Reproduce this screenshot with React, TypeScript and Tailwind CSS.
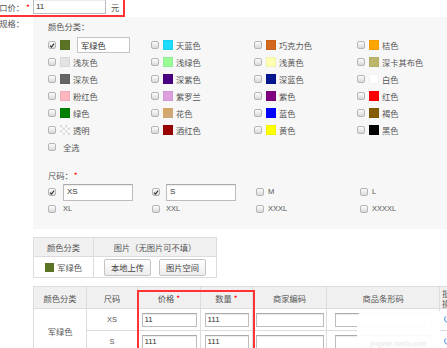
import type React from "react";

const CJK = "font-[Noto_Sans_CJK_SC,sans-serif]";
const LAT = "font-[Liberation_Sans,Noto_Sans_CJK_SC,sans-serif]";

const colors: [string, string][] = [
  ["军绿色", "#5b7424"],
  ["天蓝色", "#1edcff"],
  ["巧克力色", "#d2691e"],
  ["桔色", "#ffa500"],
  ["浅灰色", "#e3e3e3"],
  ["浅绿色", "#98fb98"],
  ["浅黄色", "#ffffb1"],
  ["深卡其布色", "#bdb76b"],
  ["深灰色", "#666666"],
  ["深紫色", "#4b0082"],
  ["深蓝色", "#041690"],
  ["白色", "#ffffff"],
  ["粉红色", "#ffb6c1"],
  ["紫罗兰", "#dda0dd"],
  ["紫色", "#800080"],
  ["红色", "#ff0000"],
  ["绿色", "#008000"],
  ["花色", "flower"],
  ["蓝色", "#0000ff"],
  ["褐色", "#855b00"],
  ["透明", "clear"],
  ["酒红色", "#990000"],
  ["黄色", "#ffff00"],
  ["黑色", "#000000"],
];

function Checkbox({ checked = false }: { checked?: boolean }) {
  return (
    <span className="flex h-[8px] w-[8px] shrink-0 items-center justify-center rounded-[2px] border border-[#b5b5b5] bg-linear-to-b from-[#fdfdfd] to-[#d9d9d9]">
      {checked && (
        <svg viewBox="0 0 8 8" className="h-[7px] w-[7px]">
          <path d="M1.4 4.3 L3.2 6.1 L6.7 1.5" fill="none" stroke="#333" strokeWidth="1.5" />
        </svg>
      )}
    </span>
  );
}

function Swatch({ color }: { color: string }) {
  if (color === "flower") {
    return <span className="block h-[10px] w-[10px] shrink-0 bg-linear-to-br from-[#dba35c] to-[#c9a982]" />;
  }
  if (color === "clear") {
    return (
      <svg width="10" height="10" className="block shrink-0">
        <rect width="10" height="10" fill="#fff" />
        <rect x="0" y="0" width="2.5" height="2.5" fill="#ddd" />
        <rect x="5" y="0" width="2.5" height="2.5" fill="#ddd" />
        <rect x="2.5" y="2.5" width="2.5" height="2.5" fill="#ddd" />
        <rect x="7.5" y="2.5" width="2.5" height="2.5" fill="#ddd" />
        <rect x="0" y="5" width="2.5" height="2.5" fill="#ddd" />
        <rect x="5" y="5" width="2.5" height="2.5" fill="#ddd" />
        <rect x="2.5" y="7.5" width="2.5" height="2.5" fill="#ddd" />
        <rect x="7.5" y="7.5" width="2.5" height="2.5" fill="#ddd" />
      </svg>
    );
  }
  return (
    <span
      className="block h-[10px] w-[10px] shrink-0 border border-black/5"
      style={{ backgroundColor: color }}
    />
  );
}

function TextBox({ value, className }: { value: string; className: string }) {
  return (
    <span
      className={`flex items-center border border-[#bdbdbd] border-t-[#a9a9a9] bg-white pl-[2px] text-[8px] text-[#333] shadow-[inset_0_1px_1px_rgba(0,0,0,0.08)] ${LAT} ${className}`}
    >
      {value}
    </span>
  );
}

function Label({ text, required = false }: { text: string; required?: boolean }) {
  return (
    <div className="flex w-[33px] shrink-0">
      <div className="flex w-[24px] justify-end whitespace-nowrap">{text}</div>
      {required && <span className="pl-[2px] text-[#f00]">*</span>}
    </div>
  );
}

function Th({ children, className = "" }: { children: React.ReactNode; className?: string }) {
  return (
    <th className={`border border-[#dcdcdc] bg-[#f0f0f0] p-0 text-center font-normal ${className}`}>
      {children}
    </th>
  );
}

function Td({ children, className = "", rowSpan }: { children?: React.ReactNode; className?: string; rowSpan?: number }) {
  return (
    <td rowSpan={rowSpan} className={`border border-[#dcdcdc] p-0 text-center ${className}`}>
      {children}
    </td>
  );
}

function Btn({ children }: { children: React.ReactNode }) {
  return (
    <span className="flex h-[17px] w-[47px] items-center justify-center rounded-[2px] border border-[#c4c4c4] bg-linear-to-b from-white to-[#ececec] text-[#444]">
      {children}
    </span>
  );
}

function EditIcon() {
  return (
    <svg width="8" height="9" viewBox="0 0 8 9" className="ml-[4px] block">
      <path d="M2 1.5 A3 3 0 1 0 6.5 3" fill="none" stroke="#6aa8e0" strokeWidth="1.2" />
    </svg>
  );
}

export default function App() {
  return (
    <div className={`relative h-[348px] w-[447px] overflow-hidden bg-white text-[8.25px] leading-[10px] text-[#555] ${CJK}`}>
      {/* 一口价 */}
      <div className="-mt-[1px] flex h-[18px] w-[125px] items-start border-b-2 border-r-2 border-[#f33]">
        <div className="flex h-[15px] items-center">
          <Label text="一口价：" required />
          <TextBox value="11" className="h-[15px] w-[73px]" />
          <span className="ml-[5px]">元</span>
        </div>
      </div>

      {/* 规格 */}
      <div className="flex">
        <div className="pt-[1px]">
          <Label text="规格：" />
        </div>
        <div className="flex-1 bg-[#f7f7f7] pb-[11.5px] pl-[15px] pt-[4px]">
          <div className="h-[10px]">颜色分类：</div>
          <div className="mt-[5.5px] grid grid-cols-[103px_103px_103px_103px] auto-rows-[17px]">
            {colors.map(([name, c], i) => (
              <div key={name} className="flex items-center">
                <Checkbox checked={i === 0} />
                <span className="ml-[4px] flex">
                  <Swatch color={c} />
                </span>
                {i === 0 ? (
                  <span className="ml-[7px] flex h-[16px] w-[53px] items-center border border-[#c4c4c4] bg-white pl-[3px] text-[#333]">
                    {name}
                  </span>
                ) : (
                  <span className="ml-[3px] whitespace-nowrap">{name}</span>
                )}
              </div>
            ))}
            <div className="flex items-center">
              <Checkbox />
              <span className="ml-[7px]">全选</span>
            </div>
          </div>

          <div className="mt-[14.5px] flex h-[10px]">
            尺码：<span className="ml-[1px] text-[#f00]">*</span>
          </div>
          <div className={`mt-[3.5px] grid grid-cols-[104px_104px_104px_104px] auto-rows-[17px] text-[7.5px] ${LAT}`}>
            <div className="flex items-center">
              <Checkbox checked />
              <TextBox value="XS" className="ml-[7px] h-[17px] w-[70px] pl-[3px]" />
            </div>
            <div className="flex items-center">
              <Checkbox checked />
              <TextBox value="S" className="ml-[6px] h-[17px] w-[70px] pl-[3px]" />
            </div>
            <div className="flex items-center">
              <Checkbox />
              <span className="ml-[4px]">M</span>
            </div>
            <div className="flex items-center">
              <Checkbox />
              <span className="ml-[4px]">L</span>
            </div>
            <div className="flex items-center">
              <Checkbox />
              <span className="ml-[7px]">XL</span>
            </div>
            <div className="flex items-center">
              <Checkbox />
              <span className="ml-[6px]">XXL</span>
            </div>
            <div className="flex items-center">
              <Checkbox />
              <span className="ml-[4px]">XXXL</span>
            </div>
            <div className="flex items-center">
              <Checkbox />
              <span className="ml-[4px]">XXXXL</span>
            </div>
          </div>
        </div>
      </div>

      {/* 图片表 */}
      <table className="ml-[33px] mt-[8px] w-[183px] table-fixed border-collapse">
        <colgroup>
          <col className="w-[60px]" />
          <col className="w-[123px]" />
        </colgroup>
        <thead>
          <tr className="h-[19px]">
            <Th>颜色分类</Th>
            <Th>图片（无图片可不填）</Th>
          </tr>
        </thead>
        <tbody>
          <tr className="h-[21px]">
            <Td>
              <div className="flex items-center justify-center gap-[3px]">
                <span className="block h-[9px] w-[9px] bg-[#5b7424]" />
                <span>军绿色</span>
              </div>
            </Td>
            <Td>
              <div className="flex items-center justify-center gap-[8px]">
                <Btn>本地上传</Btn>
                <Btn>图片空间</Btn>
              </div>
            </Td>
          </tr>
        </tbody>
      </table>

      {/* SKU 表 */}
      <table className="ml-[33px] mt-[8px] w-[436px] table-fixed border-collapse">
        <colgroup>
          <col className="w-[53px]" />
          <col className="w-[51px]" />
          <col className="w-[63px]" />
          <col className="w-[52px]" />
          <col className="w-[74px]" />
          <col className="w-[113px]" />
          <col className="w-[30px]" />
        </colgroup>
        <thead>
          <tr className="h-[22px]">
            <Th>颜色分类</Th>
            <Th>尺码</Th>
            <Th>
              价格<span className="ml-[2px] text-[#f00]">*</span>
            </Th>
            <Th>
              数量<span className="ml-[2px] text-[#f00]">*</span>
            </Th>
            <Th>商家编码</Th>
            <Th>商品条形码</Th>
            <Th className="pl-[2px] text-left!">
              批量
              <br />
              操作
            </Th>
          </tr>
        </thead>
        <tbody>
          {[
            ["XS", "11", "111"],
            ["S", "111", "111"],
          ].map(([size, price, qty], i) => (
            <tr key={size} className="h-[22px]">
              {i === 0 && <Td rowSpan={2}>军绿色</Td>}
              <Td className={`text-[7.5px] ${LAT}`}>{size}</Td>
              <Td>
                <div className="flex justify-center">
                  <TextBox value={price} className="h-[14px] w-[55px]" />
                </div>
              </Td>
              <Td>
                <div className="flex justify-center">
                  <TextBox value={qty} className="h-[14px] w-[44px]" />
                </div>
              </Td>
              <Td>
                <div className="flex justify-center">
                  <TextBox value="" className="h-[14px] w-[68px]" />
                </div>
              </Td>
              <Td>
                <div className="flex justify-center">
                  <TextBox value="" className="h-[14px] w-[97px]" />
                </div>
              </Td>
              <Td className="text-left">
                <EditIcon />
              </Td>
            </tr>
          ))}
        </tbody>
      </table>

      {/* 标注框 */}
      <div className="absolute left-[137px] top-[290px] h-[70px] w-[118px] border-2 border-[#f33]" />

      {/* 水印 */}
      <div className="absolute left-[357px] top-[311px] flex h-[40px] w-[83px] items-end justify-center rounded-tl-[8px] bg-white/95 pb-[2px]">
        <span className={`text-[7px] text-[#e6e6e6] ${LAT}`}>jingyan.baidu.com</span>
      </div>
    </div>
  );
}
